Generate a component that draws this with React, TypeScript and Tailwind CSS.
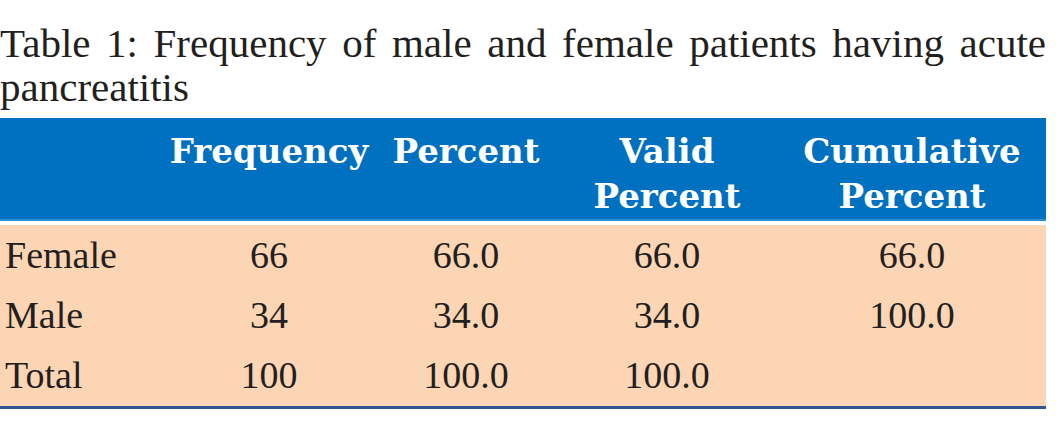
const rows = [
  ["Female", "66", "66.0", "66.0", "66.0"],
  ["Male", "34", "34.0", "34.0", "100.0"],
  ["Total", "100", "100.0", "100.0", ""],
];

const cols = "grid grid-cols-[162px_214px_180px_222px_268px]";

export default function App() {
  return (
    <div className="h-[432px] w-[1056px] bg-white font-['Liberation_Serif',serif] text-[#231f20]">
      <div className="w-[1046px] pt-[21px]">
        {/* Caption */}
        <p className="text-justify text-[41px] leading-[44px]">
          Table 1: Frequency of male and female patients having acute pancreatitis
        </p>

        {/* Header */}
        <div className="mt-[9px] border-b-2 border-[#2a8fd6] bg-[#0070c0]">
          <div className={`${cols} h-[101px] pt-[11px] font-['DejaVu_Serif',serif] text-[34px] font-bold leading-[45px] text-white`}>
            <div />
            <div className="text-center">Frequency</div>
            <div className="text-center">Percent</div>
            <div className="text-center">
              Valid
              <br />
              Percent
            </div>
            <div className="text-center">
              Cumulative
              <br />
              Percent
            </div>
          </div>
        </div>

        {/* Body */}
        <div className="mt-[4px] border-b-[3px] border-[#2e5597] bg-[#fcd5b4] pb-[1px] text-[38px] leading-[60px]">
          {rows.map((r) => (
            <div key={r[0]} className={cols}>
              <div className="pl-[5px]">{r[0]}</div>
              {r.slice(1).map((v, i) => (
                <div key={i} className="text-center">
                  {v}
                </div>
              ))}
            </div>
          ))}
        </div>
      </div>
    </div>
  );
}
